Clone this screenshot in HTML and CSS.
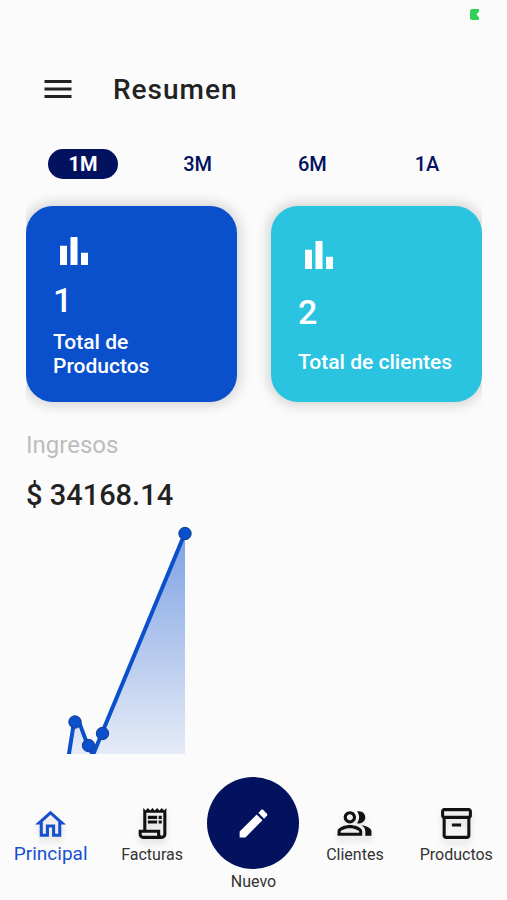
FILE: index.html
```html
<!DOCTYPE html>
<html lang="es">
<head>
  <meta charset="UTF-8" />
  <meta name="viewport" content="width=device-width, initial-scale=1.0" />
  <title>Resumen</title>
  <link rel="stylesheet" href="styles.css">
</head>
<body>
  <div class="status-bar">
    <svg class="battery" viewBox="0 0 10 11" aria-hidden="true">
      <path d="M2 0h7v2.5L6.5 5.5 9 8.5V11H2a2 2 0 0 1-2-2V2a2 2 0 0 1 2-2z" />
    </svg>
  </div>

  <header class="header">
    <button class="menu-button" type="button" aria-label="Menú">
      <svg viewBox="0 0 24 24"><path d="M3 18h18v-2H3v2zm0-5h18v-2H3v2zm0-7v2h18V6H3z" /></svg>
    </button>
    <h1 class="title">Resumen</h1>
  </header>

  <main class="content">
    <div class="periods">
      <button class="period active" type="button">1M</button>
      <button class="period" type="button">3M</button>
      <button class="period" type="button">6M</button>
      <button class="period" type="button">1A</button>
    </div>

    <section class="cards">
      <article class="card card-products">
        <svg class="card-icon" viewBox="0 0 24 24" aria-hidden="true"><path d="M4 9h4v11H4zM10 4h4v16h-4zM16 13h4v7h-4z" /></svg>
        <p class="card-number">1</p>
        <p class="card-label">Total de Productos</p>
      </article>
      <article class="card card-clients">
        <svg class="card-icon" viewBox="0 0 24 24" aria-hidden="true"><path d="M4 9h4v11H4zM10 4h4v16h-4zM16 13h4v7h-4z" /></svg>
        <p class="card-number">2</p>
        <p class="card-label">Total de clientes</p>
      </article>
    </section>

    <section class="income">
      <h2 class="income-title">Ingresos</h2>
      <p class="income-total">$ 34168.14</p>
      <svg class="chart" viewBox="0 0 456 230" aria-hidden="true">
        <defs>
          <linearGradient id="area" x1="0" y1="0" x2="0" y2="1">
            <stop offset="0" stop-color="#0a50cd" stop-opacity="0.52" />
            <stop offset="1" stop-color="#0a50cd" stop-opacity="0.08" />
          </linearGradient>
        </defs>
        <path class="chart-area" d="M42 236L49 198 62 222 68 234 76 209 159 9V236z" />
        <path class="chart-line" d="M42 236L48 198H53L62 222 67 231 76 209 159 9" />
        <circle class="chart-dot" cx="49" cy="198" r="6.2" />
        <circle class="chart-dot" cx="62.5" cy="221.5" r="6.2" />
        <circle class="chart-dot" cx="76.5" cy="209.5" r="6.2" />
        <circle class="chart-dot" cx="159" cy="9.5" r="6.2" />
      </svg>
    </section>
  </main>

  <nav class="nav">
    <a class="nav-item current" href="#">
      <svg class="nav-icon" viewBox="0 0 24 24" aria-hidden="true"><path d="M12 5.69l5 4.5V18h-2v-6H9v6H7v-7.81l5-4.5M12 3L2 12h3v8h6v-6h2v6h6v-8h3L12 3z" /></svg>
      <span class="nav-label">Principal</span>
    </a>
    <a class="nav-item" href="#">
      <svg class="nav-icon" viewBox="0 0 24 24" aria-hidden="true"><path d="M19.5 3.5L18 2l-1.5 1.5L15 2l-1.5 1.5L12 2l-1.5 1.5L9 2 7.5 3.5 6 2v14H3v3c0 1.66 1.34 3 3 3h12c1.66 0 3-1.34 3-3V2l-1.5 1.5zM15 20H6c-.55 0-1-.45-1-1v-1h10v2zm4-1c0 .55-.45 1-1 1s-1-.45-1-1v-3H8V5h11v14zM9 7h6v2H9zM16 7h2v2h-2zM9 10h6v2H9zM16 10h2v2h-2z" /></svg>
      <span class="nav-label">Facturas</span>
    </a>
    <a class="nav-item" href="#">
      <span class="nav-new">
        <svg class="nav-icon" viewBox="0 0 24 24" aria-hidden="true"><path d="M3 17.25V21h3.75L17.81 9.94l-3.75-3.75L3 17.25zM20.71 7.04c.39-.39.39-1.02 0-1.41l-2.34-2.34c-.39-.39-1.02-.39-1.41 0l-1.83 1.83 3.75 3.75 1.83-1.83z" /></svg>
      </span>
      <span class="nav-label">Nuevo</span>
    </a>
    <a class="nav-item" href="#">
      <svg class="nav-icon" viewBox="0 0 24 24" aria-hidden="true"><path d="M16.67 13.13C18.04 14.06 19 15.32 19 17v3h4v-3c0-2.18-3.57-3.47-6.33-3.87zM15 12c2.21 0 4-1.79 4-4s-1.79-4-4-4c-.47 0-.91.1-1.33.24C14.5 5.27 15 6.58 15 8s-.5 2.73-1.33 3.76c.42.14.86.24 1.33.24zM9 12c2.21 0 4-1.79 4-4s-1.79-4-4-4-4 1.79-4 4 1.79 4 4 4zm0-6c1.1 0 2 .9 2 2s-.9 2-2 2-2-.9-2-2 .9-2 2-2zM9 13c-2.67 0-8 1.34-8 4v3h16v-3c0-2.66-5.33-4-8-4zm6 5H3v-.99C3.2 16.29 6.3 15 9 15s5.8 1.29 6 2v1z" /></svg>
      <span class="nav-label">Clientes</span>
    </a>
    <a class="nav-item" href="#">
      <svg class="nav-icon" viewBox="0 0 24 24" aria-hidden="true"><path d="M20 2H4c-1 0-2 .9-2 2v3.01c0 .72.43 1.34 1 1.69V20c0 1.1 1.1 2 2 2h14c.9 0 2-.9 2-2V8.7c.57-.35 1-.97 1-1.69V4c0-1.1-1-2-2-2zm-1 18H5V9h14v11zm1-13H4V4h16v3zM9 12h6v2H9z" /></svg>
      <span class="nav-label">Productos</span>
    </a>
  </nav>
</body>
</html>
```

FILE: styles.css
```css
* {
  box-sizing: border-box;
}

body {
  background-color: #fbfbfb;
  color: #222;
  font-family: Roboto, Arial, sans-serif;
  margin: 0;
  display: flex;
  flex-direction: column;
  min-height: 100vh;
}

h1, h2, p {
  margin: 0;
}

button {
  background: none;
  border: none;
  padding: 0;
  font-family: inherit;
  cursor: pointer;
}

svg {
  display: block;
  fill: currentColor;
}

.status-bar {
  display: flex;
  justify-content: flex-end;
  height: 60px;
  padding: 9px 27px;
}

.battery {
  width: 10px;
  height: 11px;
  color: #30d158;
}

.header {
  display: flex;
  align-items: center;
  gap: 37px;
  height: 58px;
  padding: 0 40px;
}

.menu-button {
  width: 36px;
  height: 36px;
  color: #222;
}

.title {
  font-size: 28px;
  font-weight: 500;
  letter-spacing: 1px;
}

.content {
  padding: 31px 25px 0 26px;
}

.periods {
  display: flex;
  justify-content: space-between;
  padding: 0 20px 0 22px;
}

.period {
  width: 70px;
  height: 30px;
  border-radius: 15px;
  color: #03125e;
  font-size: 20px;
  font-weight: 500;
}

.period.active {
  background: #03125e;
  color: white;
  font-weight: 700;
}

/* clips the card shadows at the page margins */
.cards {
  display: grid;
  grid-template-columns: 1fr 1fr;
  gap: 34px;
  margin-top: 11px;
  padding: 16px 0;
  overflow: hidden;
}

.card {
  display: flex;
  flex-direction: column;
  justify-content: space-around;
  min-height: 196px;
  padding: 20px 27px;
  border-radius: 27px;
  box-shadow: 0 0 12px 4px rgba(0, 0, 0, 0.14);
  color: white;
}

.card-products {
  background: #0a50cd;
}

.card-clients {
  background: #2ac4e1;
}

.card-icon {
  width: 42px;
  height: 42px;
}

.card-number {
  font-size: 34px;
  font-weight: 500;
  line-height: 41px;
}

.card-label {
  font-size: 21px;
  font-weight: 500;
  line-height: 24px;
}

.income-title {
  margin-top: 13px;
  color: #bdbdbd;
  font-size: 24px;
  font-weight: 400;
  line-height: 28px;
}

.income-total {
  margin-top: 18px;
  font-size: 29px;
  font-weight: 500;
  line-height: 36px;
}

.chart {
  width: 100%;
  margin-top: 11px;
}

.chart-area {
  fill: url(#area);
}

.chart-line {
  fill: none;
  stroke: #0a50cd;
  stroke-width: 4;
}

.chart-dot {
  fill: #0a50cd;
  stroke: #123c8c;
}

.nav {
  display: grid;
  grid-template-columns: repeat(5, 1fr);
  align-items: center;
  margin-top: auto;
  padding-bottom: 8px;
}

.nav-item {
  display: flex;
  flex-direction: column;
  align-items: center;
  gap: 3px;
  color: #111;
  text-decoration: none;
}

.nav-icon {
  width: 37px;
  height: 37px;
  filter: drop-shadow(0 5px 3px rgba(0, 0, 0, 0.12));
}

.nav-label {
  color: #333;
  font-size: 16px;
  line-height: 20px;
}

.nav-item.current {
  gap: 1px;
}

.current,
.current .nav-label {
  color: #1650d0;
}

.current .nav-label {
  font-size: 19px;
}

.nav-new {
  display: flex;
  align-items: center;
  justify-content: center;
  width: 92px;
  height: 92px;
  border-radius: 50%;
  background: #03125e;
  color: white;
}

.nav-new .nav-icon {
  filter: none;
}
```
